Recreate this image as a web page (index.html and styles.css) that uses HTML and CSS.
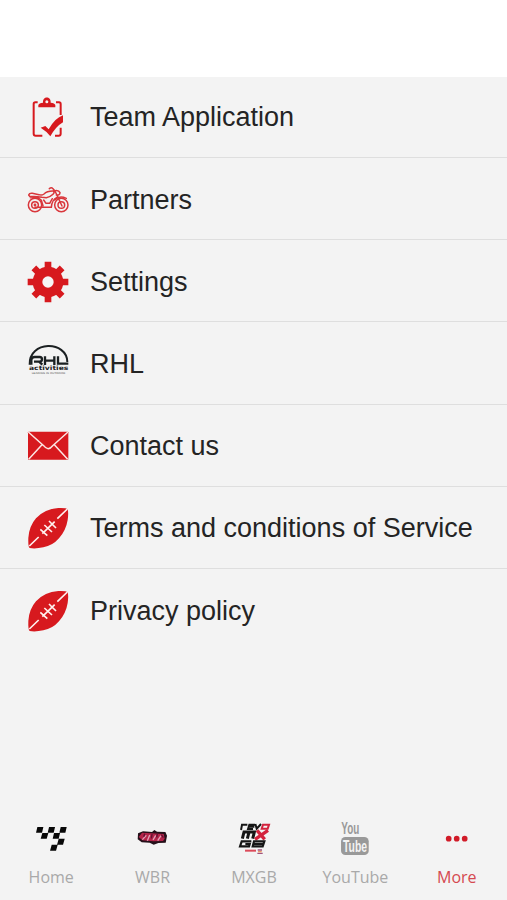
FILE: index.html
```html
<!DOCTYPE html>
<html lang="en">
<head>
<meta charset="utf-8">
<title>More</title>
<link rel="stylesheet" href="styles.css">
</head>
<body>
<div class="app">
<header class="header"></header>
<main class="menu">
  <a class="row">
    <svg class="icon" viewBox="0 -9 180 180" fill="none" stroke="#d7191e" stroke-width="6">
      <path d="M53 37H46Q41 37 41 42V131Q41 137 47 137H67M108 37H117Q122 37 122 42V75M122 113V131Q122 137 116 137H105"/>
      <path d="M55 52V45Q57 39 69 38C67 17 94 17 92 38Q104 39 106 45V52Z" fill="#d7191e" stroke="none"/>
      <circle cx="80.500" cy="35" r="4.500" fill="#f3f3f3" stroke="none"/>
      <path d="M62 113L76 108L86 118Q105 84 129 76V97Q108 109 91 139Q79 123 62 113Z" fill="#d7191e" stroke="none"/>
    </svg>
    <span class="title">Team Application</span>
  </a>
  <a class="row">
    <svg class="icon" viewBox="0 -19 180 180" fill="none" stroke="#d9363b" stroke-width="4.500" stroke-linecap="round" stroke-linejoin="round">
      <circle cx="45" cy="89" r="20"/><circle cx="45" cy="89" r="10"/><circle cx="45" cy="89" r="2"/>
      <circle cx="124" cy="89" r="20"/><circle cx="124" cy="89" r="10"/>
      <path d="M26 59Q28 53 37 54L57 58Q65 61 72 56Q82 46 101 47Q104 52 99 57Q91 65 79 67L66 66L53 64L29 63ZM31 67Q53 62 64 75L69 91M45 96H94Q96 72 111 66M88 40Q94 35 99 40L105 47L126 92M102 47Q116 43 120 52Q120 60 109 59M71 74L78 84H89L97 70M104 74Q118 59 139 69"/>
    </svg>
    <span class="title">Partners</span>
  </a>
  <a class="row">
    <svg class="icon" viewBox="0 -13 180 180">
      <g transform="translate(84 80)">
        <path d="M-10 -61H10V61H-10ZM-61 -10V10H61V-10Z" fill="#d7191e"/>
        <path d="M-10 -60H10V60H-10ZM-60 -10V10H60V-10Z" fill="#d7191e" transform="rotate(45)"/>
        <circle r="46" fill="#d7191e"/>
        <circle r="17" fill="#f6f6f6"/>
      </g>
    </svg>
    <span class="title">Settings</span>
  </a>
  <a class="row">
    <svg class="icon logo" viewBox="0 -15 180 180">
      <path d="M29 80C26 7 141 7 142 72" fill="none" stroke="#1b2022" stroke-width="6"/>
      <path d="M34 80V66Q34 57 44 57H59Q66 57 66 64Q66 71 58 71H42M57 71L67 80M75 55V81M75 68H101M103 55V81M114 55V77H145" fill="none" stroke="#1b2022" stroke-width="7"/>
      <text x="27" y="97" font-size="18" textLength="118" lengthAdjust="spacingAndGlyphs" font-weight="700">activities</text>
      <text x="35" y="108" font-size="7" textLength="101" lengthAdjust="spacingAndGlyphs" opacity=".8">LEADING IN OUTDOOR</text>
    </svg>
    <span class="title">RHL</span>
  </a>
  <a class="row">
    <svg class="icon" viewBox="0 -14 180 180">
      <rect x="24" y="36" width="121" height="84" rx="2" fill="#d7191e"/>
      <path d="M25 37L71 78Q84 96 98 78L144 37M26 119L66 75M143 119L103 75" fill="none" stroke="#fce5e3" stroke-width="4.500"/>
    </svg>
    <span class="title">Contact us</span>
  </a>
  <a class="row">
    <svg class="icon" viewBox="0 -9 180 180">
      <path d="M29 144Q24 140 25 114Q27 79 48 55Q73 27 115 24Q139 23 143 28Q146 38 143 60Q138 91 117 115Q98 137 70 142Q46 147 29 144Z" fill="#d7191e"/>
      <path d="M28 138L56 111M112 56L142 27M67 101L104 65M61 88L82 107M73 75L96 96M87 63L108 84" fill="none" stroke="#fff0ee" stroke-width="5"/>
    </svg>
    <span class="title">Terms and conditions of Service</span>
  </a>
  <a class="row">
    <svg class="icon" viewBox="0 -9 180 180">
      <path d="M29 144Q24 140 25 114Q27 79 48 55Q73 27 115 24Q139 23 143 28Q146 38 143 60Q138 91 117 115Q98 137 70 142Q46 147 29 144Z" fill="#d7191e"/>
      <path d="M28 138L56 111M112 56L142 27M67 101L104 65M61 88L82 107M73 75L96 96M87 63L108 84" fill="none" stroke="#fff0ee" stroke-width="5"/>
    </svg>
    <span class="title">Privacy policy</span>
  </a>
</main>
<nav class="tabs">
  <a class="tab">
    <svg class="tab-icon" viewBox="-60 0 304 135" fill="#080808">
      <path d="M52 36H70L66 53H48ZM87 36H105L101 53H83ZM122 36H140L136 53H118ZM67 54H85L80 71H62ZM102 54H120L116 71H98ZM116 71H134L129 89H111ZM95 89H113L108 107H90Z"/>
    </svg>
    <span>Home</span>
  </a>
  <a class="tab">
    <svg class="tab-icon" viewBox="244 0 304 135">
      <path d="M355 55L370 49L397 51L404 45L412 50L437 51L442 62L438 83L416 84L402 89L390 83L366 82L354 73Z" fill="#25101a"/>
      <path d="M357 66L367 53L393 55L432 57L435 71L430 78L401 79L368 76Z" fill="#b42349"/>
      <path d="M368 74L380 61M383 77L390 60M400 75L408 61M414 77L424 62" fill="none" stroke="#e3a0b8" stroke-width="4"/>
      <path d="M375 56L372 65M397 57L395 70M413 56L411 67M425 59L431 68" stroke="#611032" stroke-width="4"/>
    </svg>
    <span>WBR</span>
  </a>
  <a class="tab">
    <svg class="tab-icon" viewBox="-52 0 304 135" fill="none" stroke="#151515">
      <path d="M62 45L65 29H81M104 29H87L83 42H98M86 35H102M105 27L109 41L122 27" stroke-width="6"/>
      <path d="M128 29H146L142 41H124Z" stroke="#d3223d" stroke-width="6"/>
      <path d="M66 71L71 51H86L81 71M86 51H102L97 71" stroke-width="9"/>
      <path d="M110 46L133 73M143 46L104 73" stroke="#d3223d" stroke-width="10"/>
      <path d="M93 79H64L59 94H86L88 87H75M101 79L97 94H127L132 79ZM101 87H129" stroke-width="6.500"/>
      <path d="M74 107H107" stroke="#dc4a59" stroke-width="6"/>
      <path d="M112 105H125M111 115H127" stroke="#a1547e" stroke-width="4"/>
      <path d="M113 110H124" stroke="#ee9a65" stroke-width="4"/>
    </svg>
    <span>MXGB</span>
  </a>
  <a class="tab">
    <svg class="tab-icon youtube" viewBox="253 0 304 135">
      <text x="365" y="58" font-size="47" textLength="54" lengthAdjust="spacingAndGlyphs">You</text>
      <rect x="364" y="66" width="83" height="54" rx="13"/>
      <text class="tube" x="370" y="110" font-size="47" textLength="72" lengthAdjust="spacingAndGlyphs">Tube</text>
    </svg>
    <span>YouTube</span>
  </a>
  <a class="tab active">
    <svg class="tab-icon" viewBox="-43 0 304 135" fill="#d11b28">
      <circle cx="85" cy="71" r="8.500"/><circle cx="109" cy="71" r="8.500"/><circle cx="133" cy="71" r="8.500"/>
    </svg>
    <span>More</span>
  </a>
</nav>
</div>
</body>
</html>
```

FILE: styles.css
```css
* { box-sizing: border-box; }
body { margin: 0; background: #f3f3f3; }
.app { display: flex; flex-direction: column; height: 900px; overflow: hidden; }
.header { flex: 0 0 77px; background: #fff; }
.menu { flex: 1; }
.row {
  display: flex;
  align-items: center;
  height: 82.2px;
  padding-left: 20px;
  border-bottom: 1px solid #dedede;
  color: #242424;
  font: 27px/32px "Liberation Sans", Arial, sans-serif;
}
.row:first-child { height: 81px; }
.row:last-child { border-bottom-color: transparent; }
.icon { width: 60px; height: 60px; flex: none; }
.title { margin-left: 10px; white-space: nowrap; }
.row + .row .title { padding-top: 2px; }
.logo text { font-family: "DejaVu Sans", sans-serif; fill: #1b2022; }
.tabs { display: grid; grid-template-columns: repeat(5, 1fr); flex: 0 0 85px; }
.tab {
  display: flex;
  flex-direction: column;
  align-items: center;
  color: #a9a9a9;
  font: 16px/22px "Open Sans", sans-serif;
}
.tab span { margin-top: 6px; padding-left: 1px; }
.tab-icon { width: 100%; height: 45px; }
.youtube { fill: #999; font-family: "Liberation Sans", Arial, sans-serif; font-weight: 700; }
.youtube .tube { fill: #f3f3f3; }
.active { color: #d54950; }
```
